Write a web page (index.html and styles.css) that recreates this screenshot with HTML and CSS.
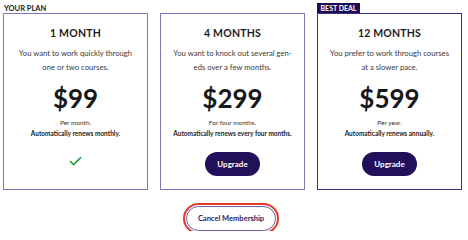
FILE: index.html
```html
<!DOCTYPE html>
<html lang="en">
<head>
<meta charset="utf-8">
<link rel="stylesheet" href="styles.css">
</head>
<body>
<div class="page">
  <div class="plans">
    <div class="plan">
      <div class="label-row"><span class="label">YOUR PLAN</span></div>
      <div class="card card-current">
        <div class="title">1 MONTH</div>
        <p class="desc">You want to work quickly through<br>one or two courses.</p>
        <div class="price">$99</div>
        <div class="period">Per month.</div>
        <div class="renew">Automatically renews monthly.</div>
        <svg class="check" width="13" height="10" viewBox="0 0 13 10"><path d="M1 5 L4.6 8.6 L12 1.2" fill="none" stroke="#1f9a2b" stroke-width="1.6"/></svg>
      </div>
    </div>
    <div class="plan">
      <div class="label-row"></div>
      <div class="card">
        <div class="title">4 MONTHS</div>
        <p class="desc">You want to knock out several gen-<br>eds over a few months.</p>
        <div class="price">$299</div>
        <div class="period">For four months.</div>
        <div class="renew">Automatically renews every four months.</div>
        <button class="upgrade">Upgrade</button>
      </div>
    </div>
    <div class="plan">
      <div class="label-row"><span class="badge">BEST DEAL</span></div>
      <div class="card card-best">
        <div class="title">12 MONTHS</div>
        <p class="desc">You prefer to work through courses<br>at a slower pace.</p>
        <div class="price">$599</div>
        <div class="period">Per year.</div>
        <div class="renew">Automatically renews annually.</div>
        <button class="upgrade">Upgrade</button>
      </div>
    </div>
  </div>
  <div class="cancel-row">
    <button class="cancel">Cancel Membership</button>
  </div>
</div>
</body>
</html>
```
FILE: styles.css
```css
html, body {
  margin: 0;
  padding: 0;
  background: #ffffff;
}
body {
  font-family: "Lato", "Open Sans", sans-serif;
  color: #1c1c22;
}
.page {
  padding: 3px 7px 0 3px;
  width: 468px;
  box-sizing: border-box;
}
.plans {
  display: grid;
  grid-template-columns: 145px 145px 145px;
  column-gap: 12px;
}
.plan {
  display: flex;
  flex-direction: column;
}
.label-row {
  height: 10px;
  display: flex;
  align-items: flex-end;
}
.label {
  font-size: 7.5px;
  font-weight: 700;
  line-height: 9px;
  padding-left: 1px;
  color: #222;
}
.badge {
  background: #1e0b57;
  color: #fff;
  font-size: 7px;
  font-weight: 700;
  line-height: 10px;
  height: 10px;
  padding: 0 3.5px;
}
.card {
  height: 177px;
  box-sizing: border-box;
  border: 1.5px solid #8576b9;
  display: flex;
  flex-direction: column;
  align-items: center;
  text-align: center;
  padding-top: 12px;
}
.card-best {
  border-color: #3f2f86;
}
.title {
  font-size: 10.5px;
  font-weight: 700;
  line-height: 14px;
  letter-spacing: 0.2px;
}
.desc {
  margin: 5.5px 0 0;
  font-size: 7.7px;
  line-height: 14px;
  color: #3a3a40;
}
.price {
  margin-top: 8px;
  font-size: 26px;
  font-weight: 700;
  line-height: 32px;
  color: #18181c;
}
.period {
  margin-top: 3.5px;
  font-size: 6.5px;
  line-height: 11px;
  color: #333;
}
.renew {
  font-size: 6.5px;
  font-weight: 700;
  line-height: 11px;
  color: #222;
}
.check {
  margin-top: 17px;
}
.upgrade {
  margin-top: 12.5px;
  width: 55px;
  height: 24px;
  border: none;
  border-radius: 12px;
  background: #22105a;
  color: #fff;
  font-family: inherit;
  font-size: 8px;
  font-weight: 700;
  padding: 0;
}
.cancel-row {
  display: flex;
  justify-content: center;
  padding-top: 16px;
  padding-right: 2px;
}
.cancel {
  width: 90px;
  height: 25px;
  border: 1px solid #6c5caa;
  border-radius: 13px;
  background: #fff;
  color: #2b1c62;
  font-family: inherit;
  font-size: 7.5px;
  font-weight: 700;
  padding: 0;
  outline: 2px solid #e53a2b;
  outline-offset: 1px;
}
```
